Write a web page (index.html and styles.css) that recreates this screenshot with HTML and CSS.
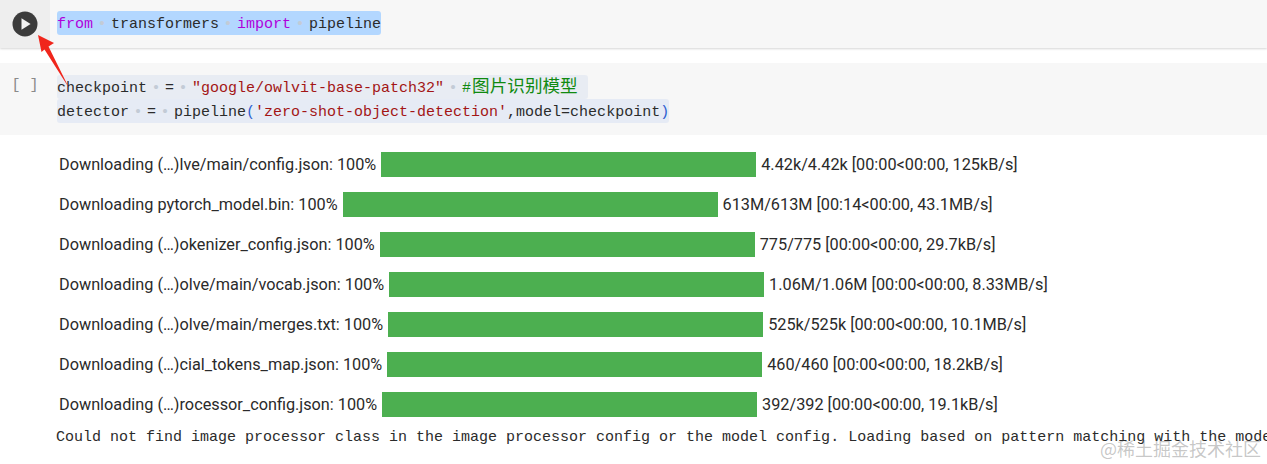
FILE: index.html
```html
<!DOCTYPE html>
<html lang="zh">
<head>
<meta charset="utf-8">
<title>Notebook</title>
<link rel="stylesheet" href="styles.css">
</head>
<body>
<div class="page">
  <section class="cell cell-first">
    <div class="gutter gutter-active">
      <button class="run" aria-label="run">
        <svg width="26" height="26" viewBox="0 0 26 26"><circle cx="13" cy="13" r="12.5" fill="#3c3c3c"/><path d="M9.5 7.2 18.6 13 9.5 18.8Z" fill="#f4f4f4"/></svg>
      </button>
    </div>
    <div class="code">
      <div class="line"><span class="hl-select"><span class="kw">from</span><span class="ws">•</span>transformers<span class="ws">•</span><span class="kw">import</span><span class="ws">•</span>pipeline</span></div>
    </div>
  </section>
  <section class="cell cell-second">
    <div class="gutter"><span class="brackets">[ ]</span></div>
    <div class="code">
      <div class="line"><span class="hl-soft">checkpoint<span class="ws">•</span>=<span class="ws">•</span><span class="str">"google/owlvit-base-patch32"</span><span class="ws">•</span><span class="cm">#<span class="cjk">图片识别模型</span></span></span></div>
      <div class="line"><span class="hl-soft">detector<span class="ws">•</span>=<span class="ws">•</span>pipeline<span class="paren">(</span><span class="str">'zero-shot-object-detection'</span>,model=checkpoint<span class="paren">)</span></span></div>
    </div>
  </section>
  <section class="output">
    <div class="bars">
      <div class="row"><span>Downloading (…)lve/main/config.json: 100%</span><div class="bar"></div><span>4.42k/4.42k [00:00&lt;00:00, 125kB/s]</span></div>
      <div class="row"><span>Downloading pytorch_model.bin: 100%</span><div class="bar"></div><span>613M/613M [00:14&lt;00:00, 43.1MB/s]</span></div>
      <div class="row"><span>Downloading (…)okenizer_config.json: 100%</span><div class="bar"></div><span>775/775 [00:00&lt;00:00, 29.7kB/s]</span></div>
      <div class="row"><span>Downloading (…)olve/main/vocab.json: 100%</span><div class="bar"></div><span>1.06M/1.06M [00:00&lt;00:00, 8.33MB/s]</span></div>
      <div class="row"><span>Downloading (…)olve/main/merges.txt: 100%</span><div class="bar"></div><span>525k/525k [00:00&lt;00:00, 10.1MB/s]</span></div>
      <div class="row"><span>Downloading (…)cial_tokens_map.json: 100%</span><div class="bar"></div><span>460/460 [00:00&lt;00:00, 18.2kB/s]</span></div>
      <div class="row"><span>Downloading (…)rocessor_config.json: 100%</span><div class="bar"></div><span>392/392 [00:00&lt;00:00, 19.1kB/s]</span></div>
    </div>
    <pre class="log">Could not find image processor class in the image processor config or the model config. Loading based on pattern matching with the model's feature extractor configuration.</pre>
  </section>
  <svg class="arrow" width="1267" height="464" viewBox="0 0 1267 464"><path d="M38 35 54 43 48.5 46.5 69 88 44.5 49.5 41.5 52Z" fill="#f0261c"/></svg>
  <div class="watermark">@稀土掘金技术社区</div>
</div>
</body>
</html>
```
FILE: styles.css
```css
* { box-sizing: border-box; }
html, body { margin: 0; padding: 0; background: #fff; }
.page {
  position: relative;
  width: 1267px;
  height: 464px;
  overflow: hidden;
  font-family: Roboto, "Liberation Sans", sans-serif;
  color: #2a2a2a;
}
.cell { display: flex; background: #f7f7f7; }
.cell-first {
  height: 48px;
  box-shadow: 0 1px 2px rgba(0, 0, 0, 0.16);
}
.cell-second { height: 72px; margin-top: 15px; }
.gutter { width: 50px; flex: none; display: flex; justify-content: center; }
.gutter-active { background: #eeeeee; align-items: flex-start; }
.run {
  margin: 11px 0 0;
  padding: 0;
  width: 26px;
  height: 26px;
  border: 0;
  background: none;
  display: block;
}
.run svg { display: block; }
.brackets {
  font: 15px/18px "Liberation Mono", monospace;
  color: #8a8a8a;
  margin-top: 14px;
  white-space: pre;
}
.code {
  padding-left: 7px;
  font-family: "Liberation Mono", "Noto Sans CJK SC", monospace;
  font-size: 15px;
  color: #2b2b2b;
}
.cell-first .code { padding-top: 11px; }
.cell-second .code { padding-top: 12px; }
.line { height: 24px; line-height: 28px; white-space: pre; }
.hl-select { display: block; width: fit-content; height: 24px; background: #b3d7ff; border-radius: 3px; }
.hl-soft { display: block; width: fit-content; height: 24px; background: #e8ecf3; border-radius: 3px; padding-right: 10px; }
.line + .line .hl-soft { background: #e6ebf5; padding-right: 0; }
.kw { color: #af00db; }
.str { color: #a31515; }
.cm { color: #108a10; }
.cjk { font-family: "Noto Sans CJK SC", sans-serif; font-size: 17.6px; line-height: 0; margin-left: 1px; }
.paren { color: #2f5fd0; }
.ws { display: inline-block; width: 18px; line-height: 0; text-align: center; color: #c3cbd6; }
.output { padding: 17px 0 0 0; }
.bars {
  display: flex;
  flex-direction: column;
  gap: 15px;
  padding-left: 59px;
}
.row {
  display: flex;
  align-items: center;
  gap: 5px;
  height: 25px;
  font-size: 16.25px;
  white-space: nowrap;
}
.bar { width: 375px; height: 25px; background: #4caf50; flex: none; }
.log {
  margin: 11px 0 0 56px;
  font: 15px/20px "Liberation Mono", monospace;
  color: #2b2b2b;
  white-space: pre;
}
.arrow { position: absolute; left: 0; top: 0; }
.watermark {
  position: absolute;
  left: 1100px;
  top: 436px;
  font: 18px/24px "Noto Sans CJK SC", sans-serif;
  color: rgba(120, 120, 120, 0.42);
  white-space: nowrap;
}
```
